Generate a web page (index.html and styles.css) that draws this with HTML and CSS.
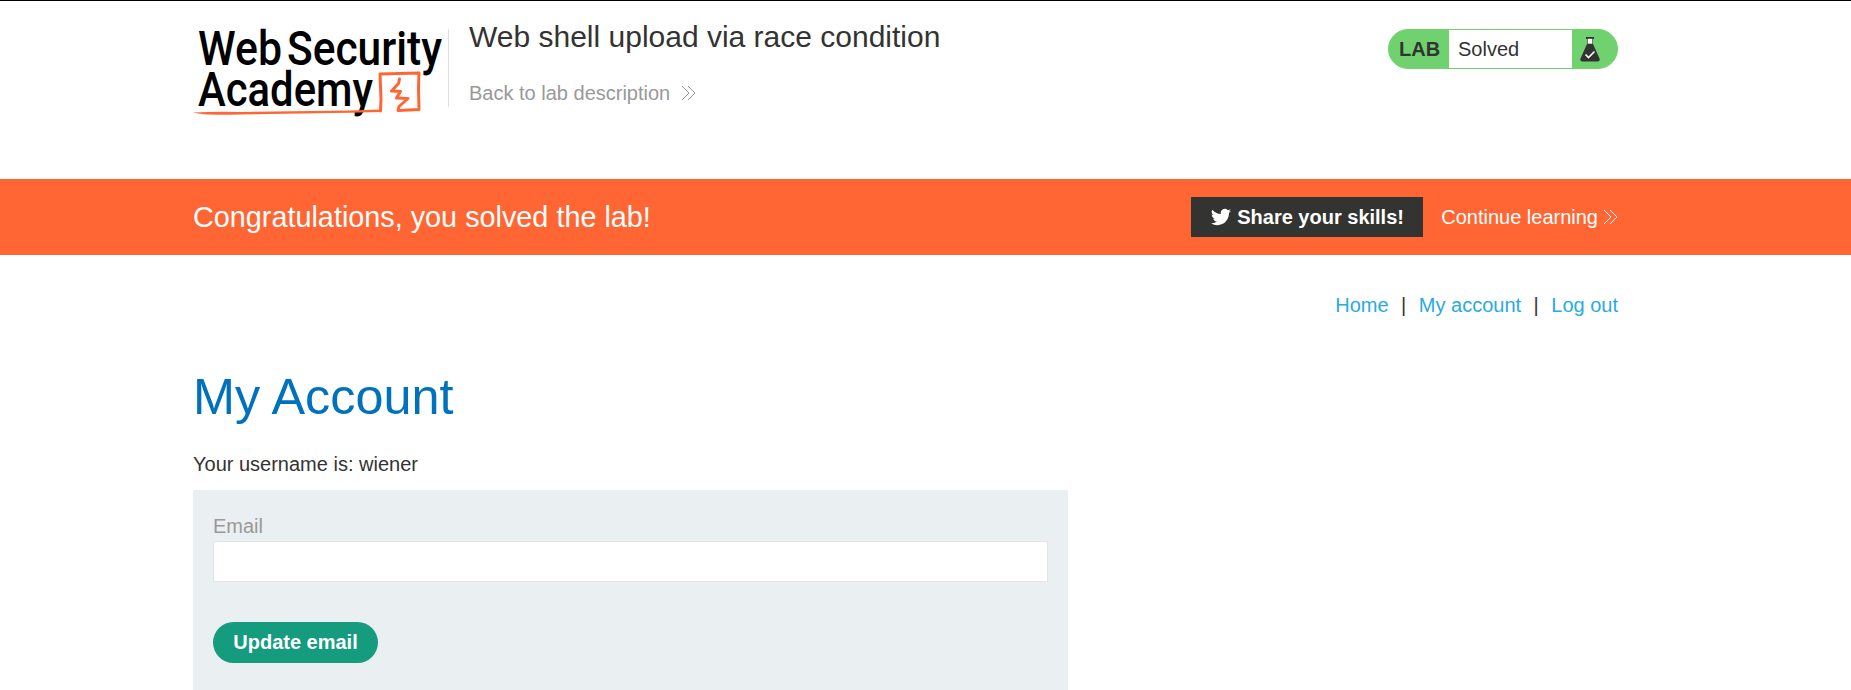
FILE: index.html
```html
<!DOCTYPE html>
<html lang="en">
<head>
<meta charset="utf-8">
<title>Web shell upload via race condition</title>
<link rel="stylesheet" href="styles.css">
</head>
<body>
<header class="lab-header">
  <div class="container header-row">
    <svg class="logo" width="250" height="95" viewBox="193 25 250 95" role="img" aria-label="Web Security Academy">
      <g class="logo-text">
        <text x="198" y="65" textLength="84" lengthAdjust="spacingAndGlyphs">Web</text>
        <text x="287" y="65" textLength="155" lengthAdjust="spacingAndGlyphs">Security</text>
        <text x="198" y="106" textLength="175" lengthAdjust="spacingAndGlyphs">Academy</text>
      </g>
      <path class="logo-fill" d="M193 112.500Q215 111.500 240 112L350 110.500L381 109.500V112L350 112.800L240 114.500Q203 115.500 193 112.500z"/>
      <path class="logo-line" d="M380.500 111L381 99L380 74L419 73L418.500 88L419 109.500L398 110.500L399 106.500L408 98.500L396.500 98L400.500 91.500L391.500 91L398.500 83.500L399.500 79"/>
    </svg>
    <div class="title-block">
      <h2 class="lab-title">Web shell upload via race condition</h2>
      <a class="back-link">Back to lab description
        <svg class="chev" width="15" height="16" viewBox="0 0 15 16"><path d="M1 1l7 7-7 7M7 1l7 7-7 7"/></svg>
      </a>
    </div>
    <div class="status">
      <span class="status-label">LAB</span>
      <span class="status-value">Solved</span>
      <svg class="flask" width="22" height="26" viewBox="0 0 22 26"><path fill="#333332" d="M7 1h8v2H7zM8 8h6l6.500 14.500q.8 3-2 3h-15q-2.800 0-2-3z"/><path fill="#fff" stroke="#333332" stroke-width=".6" d="M8.500 2.500h5v5.500h-5z"/><path fill="none" stroke="#fff" stroke-width="1.600" d="M6.500 18.500l3 3 6-6"/></svg>
    </div>
  </div>
</header>
<section class="banner">
  <div class="container banner-row">
    <h4 class="congrats">Congratulations, you solved the lab!</h4>
    <div class="banner-actions">
      <a class="share"><svg class="bird" width="20" height="20" viewBox="0 0 24 24"><path fill="#fff" d="M23.950 4.570a10 10 0 0 1-2.820.770 4.960 4.960 0 0 0 2.160-2.720c-.950.560-2 .960-3.130 1.190a4.920 4.920 0 0 0-8.380 4.480C7.690 8.090 4.070 6.130 1.640 3.160a4.920 4.920 0 0 0 1.520 6.570 4.900 4.900 0 0 1-2.230-.610v.060c0 2.380 1.700 4.370 3.950 4.830a5 5 0 0 1-2.210.080 4.940 4.940 0 0 0 4.600 3.420A9.870 9.870 0 0 1 0 19.540a14 14 0 0 0 7.550 2.210c9.050 0 14-7.500 14-13.980l-.020-.640a9.940 9.940 0 0 0 2.420-2.560z"/></svg><span>Share your skills!</span></a>
      <a class="continue">Continue learning <svg class="chev" width="15" height="16" viewBox="0 0 15 16"><path d="M1 1l7 7-7 7M7 1l7 7-7 7"/></svg></a>
    </div>
  </div>
</section>
<main class="container">
  <nav class="nav"><a>Home</a><span>|</span><a>My account</a><span>|</span><a>Log out</a></nav>
  <h1 class="heading">My Account</h1>
  <p class="username">Your username is: wiener</p>
  <form class="card">
    <label class="label" for="email">Email</label>
    <input class="field" id="email" type="email">
    <button class="update" type="button">Update email</button>
  </form>
</main>
</body>
</html>
```

FILE: styles.css
```css
* { box-sizing: border-box; }
body {
  margin: 0;
  height: 690px;
  overflow: hidden;
  background: #fff;
  color: #333332;
  font: 20px/24px "Liberation Sans", Arial, sans-serif;
}
h1, h2, h4, p { margin: 0; font-weight: 400; }
.container { width: 1425px; margin-left: 193px; }
.lab-header { height: 179px; border-top: 1px solid #000; }
.header-row { display: flex; align-items: flex-start; padding-top: 24px; }
.logo { display: block; flex: none; overflow: visible; }
.logo-text { font: 500 48px Roboto, sans-serif; fill: #000; }
.logo-fill { fill: #ff6633; }
.logo-line { fill: none; stroke: #ff6633; stroke-width: 3; stroke-linejoin: round; stroke-linecap: round; }
.title-block {
  height: 78px;
  margin: 4px 0 0 5px;
  border-left: 1px solid #e0e0e0;
  padding-left: 20px;
}
.lab-title { margin-top: -9px; font-size: 30px; line-height: 34px; white-space: nowrap; }
.back-link { display: flex; align-items: center; gap: 11px; margin-top: 27px; color: #999; }
.chev { fill: none; stroke: currentColor; stroke-width: 1; flex: none; }
.status {
  display: flex;
  align-items: center;
  width: 230px;
  height: 40px;
  margin: 4px 0 0 auto;
  border: 1px solid #70d26e;
  border-radius: 20px;
  background: #70d26e;
  overflow: hidden;
}
.status-label { width: 60px; padding-left: 10px; font-weight: 700; }
.status-value { width: 123px; height: 38px; padding-left: 9px; background: #fff; line-height: 38px; }
.flask { margin-left: 7px; }
.banner { height: 76px; background: #ff6633; color: #fff; }
.banner-row { height: 76px; display: flex; align-items: center; justify-content: space-between; }
.congrats { font-size: 28.800px; line-height: 34px; }
.banner-actions { display: flex; align-items: center; gap: 18px; }
.share {
  display: flex;
  align-items: center;
  gap: 6px;
  width: 232px;
  height: 40px;
  padding-left: 20px;
  background: #333332;
  font-weight: 700;
  white-space: nowrap;
}
.continue { display: flex; align-items: center; gap: 5px; }
.nav { display: flex; justify-content: flex-end; gap: 12.5px; padding-top: 38px; }
.nav a { color: #29abe2; }
.heading { margin-top: 51px; color: #0071bc; font-size: 50.400px; line-height: 58px; }
.username { margin-top: 26px; }
.card {
  display: flex;
  flex-direction: column;
  align-items: flex-start;
  width: 875px;
  height: 200px;
  margin-top: 14px;
  padding: 24px 20px 0;
  border-radius: 2px 2px 0 0;
  background: #eaeff2;
}
.label { color: #999; }
.field { width: 835px; height: 41px; margin-top: 3px; border: 1px solid #e4e4e4; background: #fff; }
.update {
  width: 165px;
  height: 41px;
  margin-top: 40px;
  padding: 0;
  border: 0;
  border-radius: 21px;
  background: #159b7e;
  color: #fff;
  font: 700 20px "Liberation Sans", Arial, sans-serif;
}
```
